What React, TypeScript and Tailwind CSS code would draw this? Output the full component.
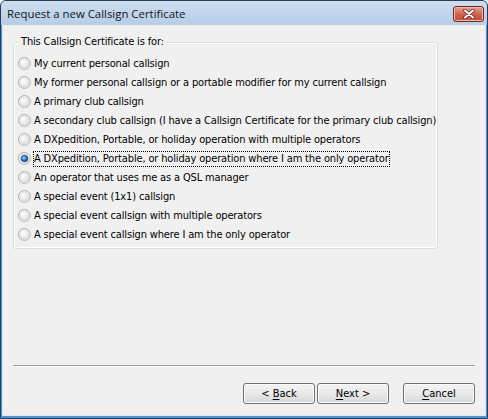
import React from "react"

const options = [
  "My current personal callsign",
  "My former personal callsign or a portable modifier for my current callsign",
  "A primary club callsign",
  "A secondary club callsign (I have a Callsign Certificate for the primary club callsign)",
  "A DXpedition, Portable, or holiday operation with multiple operators",
  "A DXpedition, Portable, or holiday operation where I am the only operator",
  "An operator that uses me as a QSL manager",
  "A special event (1x1) callsign",
  "A special event callsign with multiple operators",
  "A special event callsign where I am the only operator",
]

const Radio = ({ checked, id }: { checked: boolean; id: number }) => (
  <svg width="13" height="13" viewBox="0 0 13 13" className="shrink-0">
    <defs>
      <linearGradient id={`rb${id}`} x1="0" y1="0" x2="1" y2="1">
        <stop offset="0" stopColor="#a0a0a0" />
        <stop offset="1" stopColor="#c8c8c8" />
      </linearGradient>
      <radialGradient id={`rf${id}`} cx="0.35" cy="0.35" r="0.8">
        <stop offset="0" stopColor="#ffffff" />
        <stop offset="0.6" stopColor="#e6e6e6" />
        <stop offset="1" stopColor="#cfcfcf" />
      </radialGradient>
      <radialGradient id={`rd${id}`} cx="0.4" cy="0.4" r="0.7">
        <stop offset="0" stopColor="#9fdcfb" />
        <stop offset="0.45" stopColor="#2f86d2" />
        <stop offset="1" stopColor="#0b2f63" />
      </radialGradient>
    </defs>
    <circle cx="6.5" cy="6.5" r="6" fill={`url(#rf${id})`} stroke={`url(#rb${id})`} strokeWidth="1" />
    <circle cx="6.5" cy="6.5" r="4.2" fill="none" stroke="#dcdcdc" strokeWidth="0.8" />
    {checked && <circle cx="6.5" cy="6.5" r="3.3" fill={`url(#rd${id})`} stroke="#14386a" strokeWidth="0.6" />}
  </svg>
)

const Button = ({ pre, u, post }: { pre?: string; u: string; post?: string }) => (
  <button className="w-[72px] h-[21px] rounded-[3px] border border-[#707070] bg-gradient-to-b from-[#f4f4f4] via-[#e9e9e9] to-[#d6d6d6] shadow-[inset_0_0_0_1px_#fcfcfc] text-[11px] leading-[19px] text-black text-center whitespace-pre">
    {pre}
    <span className="underline underline-offset-[2px]">{u}</span>
    {post}
  </button>
)

export default function App() {
  const selected = 5
  return (
    <div
      className="w-[488px] h-[419px] flex flex-col bg-[#4596dc] border border-[#2c3b4d] rounded-t-[6px] overflow-hidden"
      style={{ fontFamily: '"DejaVu Sans Condensed", "Liberation Sans", sans-serif' }}
    >
      <div className="h-[24px] shrink-0 bg-gradient-to-b from-[#cddef0] to-[#b6cde7] flex items-center justify-between pl-[6px] pr-[3px]">
        <span className="text-[11.4px] text-[#10161e] mt-[1px]" style={{ fontFamily: '"Open Sans", "Noto Sans", sans-serif' }}>
          Request a new Callsign Certificate
        </span>
        <div className="w-[31px] h-[16px] mt-[2px] rounded-[3px] border border-[#6b2a22] bg-gradient-to-b from-[#e8a595] via-[#d0624f] to-[#c4493a] flex items-center justify-center shadow-[inset_0_0_0_1px_#f0b8aa]">
          <svg width="12" height="10" viewBox="0 0 12 10">
            <path d="M2 1.5 L10 8.5 M10 1.5 L2 8.5" stroke="#5a2a22" strokeWidth="3.6" strokeLinecap="round" />
            <path d="M2 1.5 L10 8.5 M10 1.5 L2 8.5" stroke="#ffffff" strokeWidth="2" strokeLinecap="round" />
          </svg>
        </div>
      </div>
      <div className="flex-1 mx-[1px] mb-[2px] bg-[#f0f0f0] border-x border-b border-[#dfe9f3] flex flex-col text-[11px] tracking-[-0.15px] text-black">
        <div className="relative mt-[17px] ml-[10px] w-[425px] h-[207px] border border-[#d5dfe5] rounded-[3px] shadow-[inset_0_0_0_1px_#ffffff] pt-[11px] pl-[4px]">
          <span className="absolute -top-[8px] left-[5px] px-[2px] bg-[#f0f0f0] leading-[14px]">
            This Callsign Certificate is for:
          </span>
          {options.map((o, i) => (
            <div key={i} className="h-[19px] flex items-center gap-[3px] whitespace-nowrap">
              <Radio checked={i === selected} id={i} />
              <span
                className={
                  i === selected
                    ? "leading-[14px] outline-1 outline-dotted outline-black"
                    : "leading-[14px]"
                }
              >
                {o}
              </span>
            </div>
          ))}
        </div>
        <div className="mt-auto mx-[10px] mr-[10px] h-[2px] border-t border-[#a0a0a0] border-b border-b-white" />
        <div className="flex justify-end mt-[16px] mb-[11px] mr-[10px] tracking-normal">
          <div className="flex gap-[2px]">
            <Button pre="< " u="B" post="ack" />
            <Button u="N" post="ext >" />
          </div>
          <div className="ml-[14px]">
            <Button u="C" post="ancel" />
          </div>
        </div>
      </div>
    </div>
  )
}
